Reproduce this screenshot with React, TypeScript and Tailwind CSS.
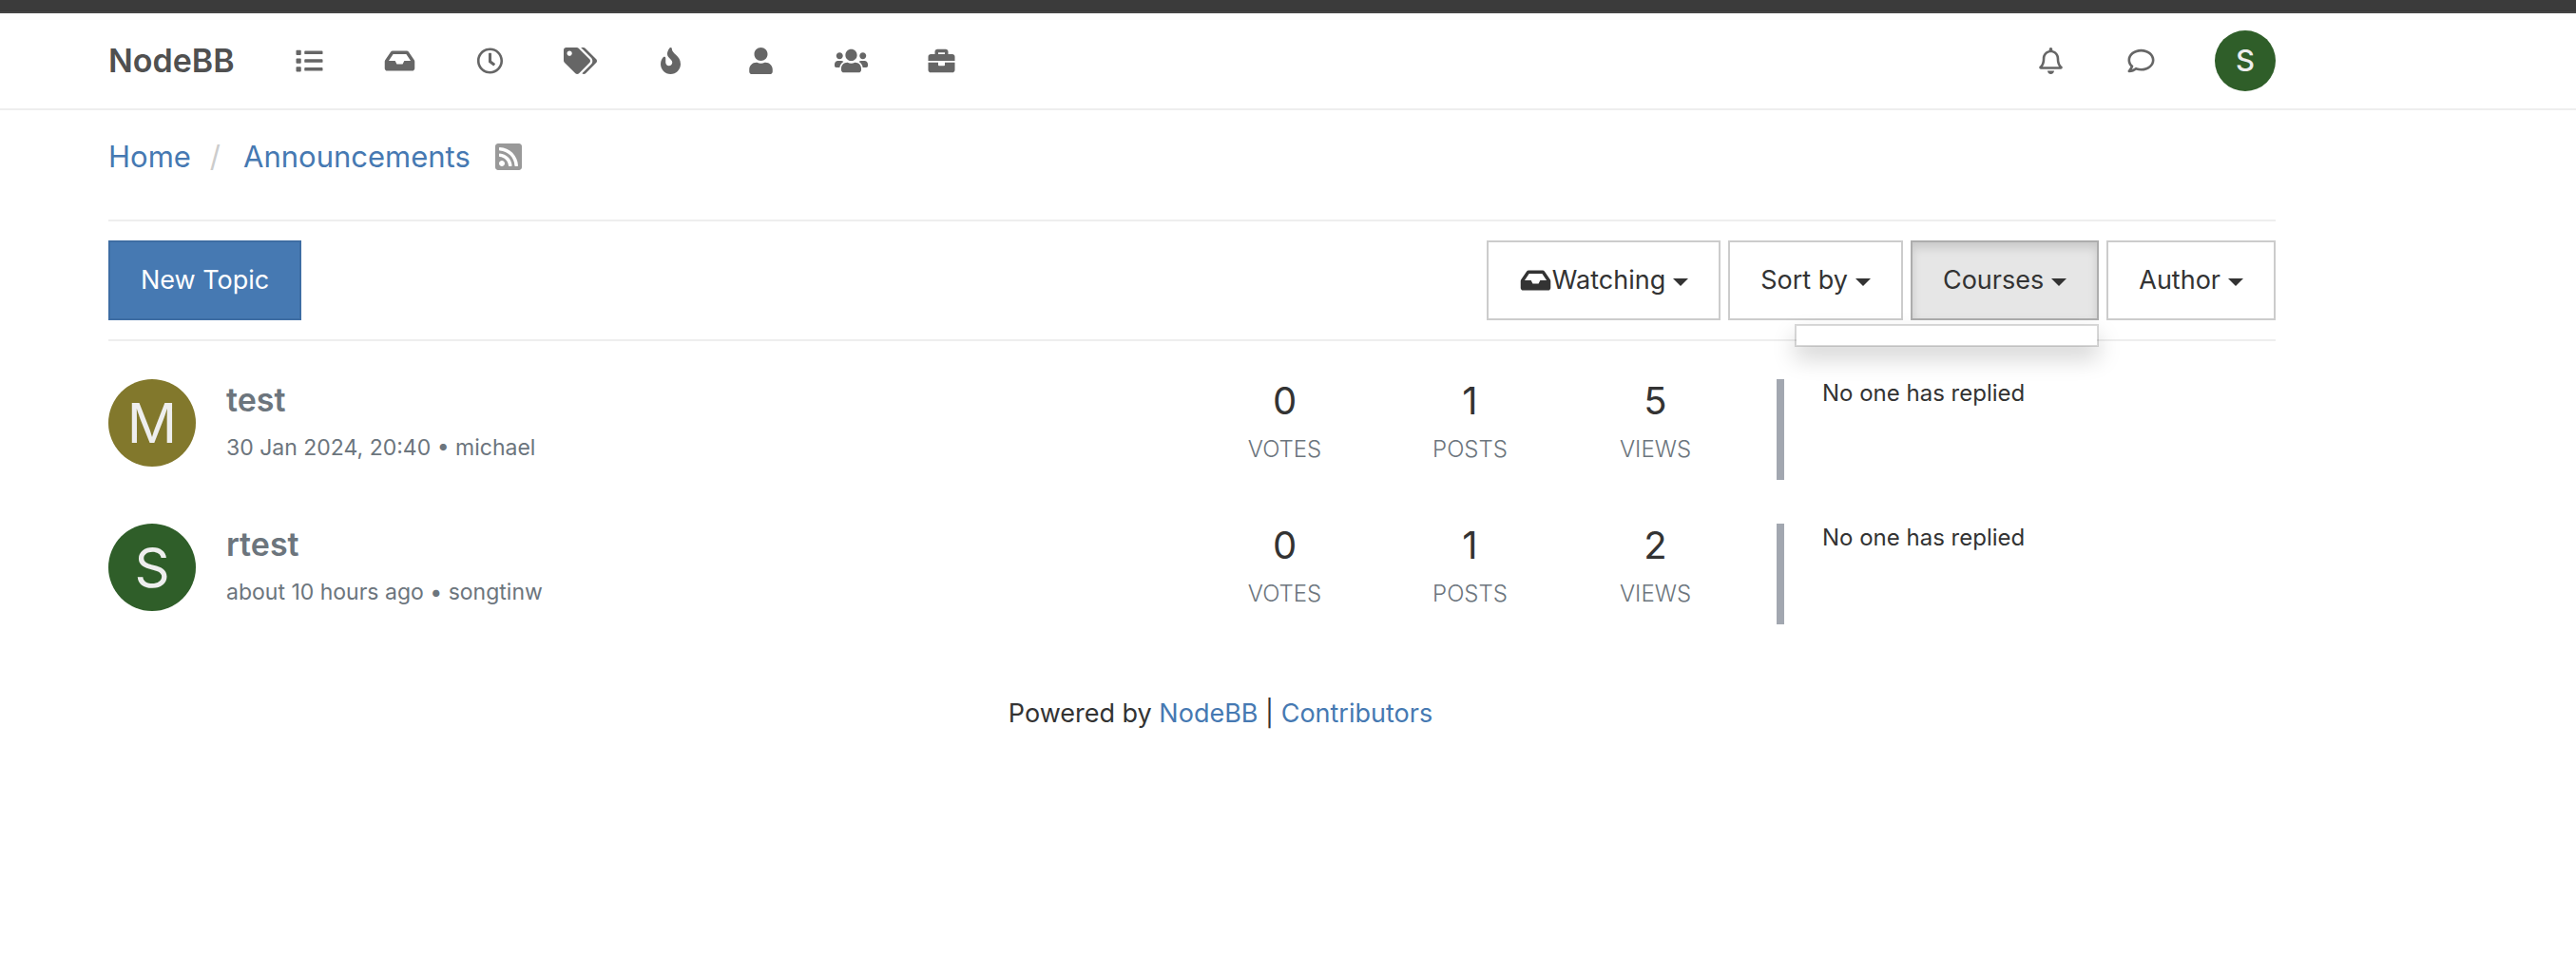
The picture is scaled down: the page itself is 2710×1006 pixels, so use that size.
import type { ReactNode } from "react";
import type { IconType } from "react-icons";
import {
  FaBriefcase,
  FaFire,
  FaInbox,
  FaList,
  FaRegBell,
  FaRegClock,
  FaRegComment,
  FaRssSquare,
  FaTags,
  FaUser,
  FaUsers,
} from "react-icons/fa";

const navItems: { label: string; Icon: IconType }[] = [
  { label: "Categories", Icon: FaList },
  { label: "Unread", Icon: FaInbox },
  { label: "Recent", Icon: FaRegClock },
  { label: "Tags", Icon: FaTags },
  { label: "Popular", Icon: FaFire },
  { label: "Users", Icon: FaUser },
  { label: "Groups", Icon: FaUsers },
  { label: "Admin", Icon: FaBriefcase },
];

const topics = [
  {
    title: "test",
    time: "30 Jan 2024, 20:40",
    author: "michael",
    initial: "M",
    avatar: "bg-[#82782c]",
    stats: [["0", "Votes"], ["1", "Posts"], ["5", "Views"]],
  },
  {
    title: "rtest",
    time: "about 10 hours ago",
    author: "songtinw",
    initial: "S",
    avatar: "bg-[#2f5e29]",
    stats: [["0", "Votes"], ["1", "Posts"], ["2", "Views"]],
  },
];

function NavLink({ label, Icon }: { label: string; Icon: IconType }) {
  return (
    <a
      href="#"
      aria-label={label}
      className="flex h-25 w-[95px] items-center justify-center text-[#666]"
    >
      <Icon className="h-7 w-[35px]" />
    </a>
  );
}

function DropdownButton({ children, open = false }: { children: ReactNode; open?: boolean }) {
  return (
    <button
      type="button"
      aria-expanded={open}
      className={
        "flex h-[84px] items-center border-2 px-8 text-[27px] leading-10 text-[#333] " +
        (open
          ? "border-[#adadad] bg-[#e6e6e6] shadow-[inset_0_6px_10px_rgba(0,0,0,0.125)]"
          : "border-[#ccc] bg-white")
      }
    >
      {children}
      <span className="mt-1 ml-2 border-x-8 border-t-8 border-x-transparent border-t-[#333]" />
    </button>
  );
}

export default function App() {
  return (
    <div className="min-h-screen bg-white font-['Inter',sans-serif] text-[27px] leading-10 text-[#333]">
      <div className="h-[14px] border-b-2 border-[#444] bg-[#3b3b3b]" />

      <header className="flex h-[102px] items-center border-b-2 border-[#eee] pr-[316px] pl-[114px]">
        <a href="#" className="w-[164px] text-[34px] font-semibold text-[#505050]">
          NodeBB
        </a>
        <nav className="flex" aria-label="Main">
          {navItems.map((item) => (
            <NavLink key={item.label} {...item} />
          ))}
        </nav>
        <div className="ml-auto flex items-center">
          <NavLink label="Notifications" Icon={FaRegBell} />
          <NavLink label="Chats" Icon={FaRegComment} />
          <button
            type="button"
            aria-label="Account"
            className="ml-[30px] flex size-16 items-center justify-center rounded-full bg-[#2f5e29] text-[31px] font-medium text-[#eee]"
          >
            S
          </button>
        </div>
      </header>

      <main className="pr-[316px] pl-[114px]">
        <nav aria-label="Breadcrumb" className="flex h-[115px] items-start pt-[27px] text-[31px] leading-11 text-[#4679b2]">
          <a href="#">Home</a>
          <span className="pr-4 pl-5 text-[#ccc]">/</span>
          <a href="#" className="ml-2">Announcements</a>
          <a href="#" aria-label="RSS feed" className="ml-6 flex h-11 items-center text-[32px] text-[#999]">
            <FaRssSquare />
          </a>
        </nav>

        <div className="flex items-center justify-between border-y-2 border-[#eee] py-5">
          <button
            type="button"
            className="h-[84px] border-2 border-[#3e6da3] bg-[#4679b2] px-8 text-white"
          >
            New Topic
          </button>
          <div className="flex gap-2">
            <DropdownButton>
              <FaInbox className="h-7 w-[35px]" />
              Watching
            </DropdownButton>
            <DropdownButton>Sort by</DropdownButton>
            <div className="relative">
              <DropdownButton open>Courses</DropdownButton>
              <ul className="absolute top-full right-0 mt-1 h-6 w-80 border-2 border-black/15 bg-white bg-clip-padding shadow-[0_12px_24px_rgba(0,0,0,0.175)]" />
            </div>
            <DropdownButton>Author</DropdownButton>
          </div>
        </div>

        <ul className="mt-10 flex flex-col gap-[46px]">
          {topics.map((topic) => (
            <li key={topic.title} className="-mx-[30px] grid h-[106px] grid-cols-12">
              <div className="col-span-6 flex px-[30px]">
                <span
                  className={
                    "flex size-[92px] shrink-0 items-center justify-center rounded-full text-[58px] text-[#eee] " +
                    topic.avatar
                  }
                >
                  {topic.initial}
                </span>
                <div className="ml-8 flex flex-col text-[#6c757d]">
                  <a href="#" className="mt-0.5 text-[34px] leading-10 font-semibold">
                    {topic.title}
                  </a>
                  <p className="mt-3 text-[23px] leading-9">
                    {topic.time} • <a href="#">{topic.author}</a>
                  </p>
                </div>
              </div>
              {topic.stats.map(([value, label]) => (
                <div key={label} className="flex flex-col items-center">
                  <span className="text-[40px] leading-[46px]">{value}</span>
                  <span className="mt-2 text-[24px] leading-10 font-light text-[#6c757d] uppercase">{label}</span>
                </div>
              ))}
              <div className="col-span-3 px-[30px]">
                <p className="h-full border-l-8 border-[#a2a7b0] pl-10 text-[24px] leading-[30px]">No one has replied</p>
              </div>
            </li>
          ))}
        </ul>

        <footer className="mt-[74px] pl-[60px] text-center">
          Powered by <a href="#" className="text-[#4679b2]">NodeBB</a> |{" "}
          <a href="#" className="text-[#4679b2]">Contributors</a>
        </footer>
      </main>
    </div>
  );
}
